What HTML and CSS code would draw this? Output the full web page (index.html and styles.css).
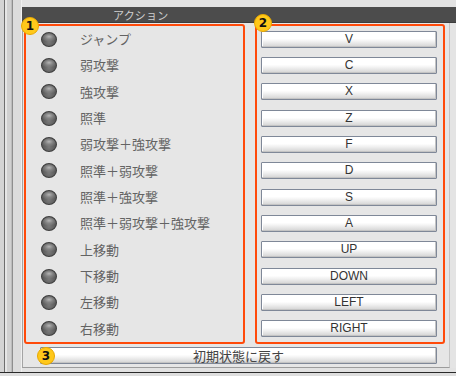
FILE: index.html
```html
<!DOCTYPE html>
<html lang="ja">
<head>
<meta charset="utf-8">
<link rel="stylesheet" href="styles.css">
</head>
<body>
<div class="win">
  <div class="frame">
    <div class="chrome-left"></div>
    <div class="main">
      <div class="top-strip"></div>
      <div class="header"><span class="header-title">アクション</span></div>
      <div class="body">
        <div class="panels">
          <div class="panel panel-left">
            <div class="row"><span class="dot"></span><span class="label">ジャンプ</span></div>
            <div class="row"><span class="dot"></span><span class="label">弱攻撃</span></div>
            <div class="row"><span class="dot"></span><span class="label">強攻撃</span></div>
            <div class="row"><span class="dot"></span><span class="label">照準</span></div>
            <div class="row"><span class="dot"></span><span class="label">弱攻撃＋強攻撃</span></div>
            <div class="row"><span class="dot"></span><span class="label">照準＋弱攻撃</span></div>
            <div class="row"><span class="dot"></span><span class="label">照準＋強攻撃</span></div>
            <div class="row"><span class="dot"></span><span class="label">照準＋弱攻撃＋強攻撃</span></div>
            <div class="row"><span class="dot"></span><span class="label">上移動</span></div>
            <div class="row"><span class="dot"></span><span class="label">下移動</span></div>
            <div class="row"><span class="dot"></span><span class="label">左移動</span></div>
            <div class="row"><span class="dot"></span><span class="label">右移動</span></div>
          </div>
          <div class="panel panel-right">
            <div class="row"><button class="key">V</button></div>
            <div class="row"><button class="key">C</button></div>
            <div class="row"><button class="key">X</button></div>
            <div class="row"><button class="key">Z</button></div>
            <div class="row"><button class="key">F</button></div>
            <div class="row"><button class="key">D</button></div>
            <div class="row"><button class="key">S</button></div>
            <div class="row"><button class="key">A</button></div>
            <div class="row"><button class="key">UP</button></div>
            <div class="row"><button class="key">DOWN</button></div>
            <div class="row"><button class="key">LEFT</button></div>
            <div class="row"><button class="key">RIGHT</button></div>
          </div>
        </div>
        <button class="key reset">初期状態に戻す</button>
      </div>
      <div class="under-body"></div>
    </div>
  </div>
  <div class="bottom-line"></div>
  <div class="bottom-strip"></div>

  <span class="badge badge-1">1</span>
  <span class="badge badge-2">2</span>
  <span class="badge badge-3">3</span>
</div>
</body>
</html>
```

FILE: styles.css
```css
* { box-sizing: border-box; }

html, body {
  margin: 0;
  padding: 0;
  background: #e2e2e2;
}

.win {
  position: relative;
  width: 456px;
  height: 376px;
  overflow: hidden;
  display: flex;
  flex-direction: column;
  background: #e4e4e4;
  font-family: "Noto Sans CJK JP", "Liberation Sans", sans-serif;
}

.frame {
  display: flex;
  height: 372px;
}

.chrome-left {
  width: 22px;
  flex: none;
  background: linear-gradient(to right,
    #d4d4d4 0 4px,
    #6e6e6e 4px 5px,
    #e6e6e6 5px 7px,
    #d0d0d0 7px 11px,
    #bcbcbc 11px 12px,
    #8e8e8e 12px 13px,
    #dcdcdc 13px 21px,
    #f0f0f0 21px 22px);
}

.main {
  flex: 1;
  display: flex;
  flex-direction: column;
}

.top-strip {
  height: 7px;
  background: #e3e3e3;
}

.header {
  height: 16px;
  background: #4c4c4c;
  color: #cfcfcf;
  font-size: 11px;
  line-height: 16px;
  padding-left: 91px;
  border-bottom: 1px solid #3c3c3c;
}

.header-title {
  letter-spacing: 0.2px;
}

.body {
  display: flex;
  flex-direction: column;
  margin-right: 6px;
  padding: 1px 4px 3px 1px;
  border-left: 1px solid #a4a4a4;
  border-right: 1px solid #c4c4c4;
  border-bottom: 1px solid #9c9c9c;
  background: #e6e6e6;
}

.under-body {
  flex: 1;
  background: #e2e2e2;
}

.panels {
  display: flex;
  gap: 10px;
  height: 320px;
}

.panel {
  border: 2px solid #ff4a0a;
  border-radius: 3px;
  display: grid;
  grid-template-rows: repeat(12, 1fr);
}

.panel-left {
  width: 221px;
}

.panel-right {
  width: 190px;
  padding: 0 6px 0 4px;
}

.row {
  display: flex;
  align-items: center;
}

.dot {
  width: 16px;
  height: 15px;
  margin-left: 15px;
  border-radius: 50%;
  border: 1px solid #3e3e3e;
  background:
    radial-gradient(ellipse 60% 40% at 50% 28%, #b4b4b4 0%, rgba(150,150,150,0.6) 50%, rgba(120,120,120,0) 100%),
    radial-gradient(circle at 50% 70%, #7a7a7a 0%, #5a5a5a 55%, #444 100%);
  flex: none;
}

.label {
  margin-left: 23px;
  font-size: 13px;
  color: #636363;
  line-height: 16px;
}

.key {
  display: block;
  width: 100%;
  height: 17px;
  margin: 0;
  padding: 0;
  border: 1px solid #7f8898;
  border-radius: 1px;
  background:
    linear-gradient(to bottom, #ffffff 0%, #ffffff 45%, #f0f0f0 65%, #d2d2d2 100%);
  box-shadow: inset -1px -1px 0 #c4c4c4, inset 1px 1px 0 #ffffff;
  font-family: "Liberation Sans", "Noto Sans CJK JP", sans-serif;
  font-size: 12px;
  line-height: 15px;
  color: #333;
  text-align: center;
}

.reset {
  width: auto;
  margin: 3px 8px 0 16px;
  font-family: "Noto Sans CJK JP", "Liberation Sans", sans-serif;
  font-size: 13px;
  color: #444;
}

.bottom-line {
  height: 1px;
  background: #2a2a2a;
}

.bottom-strip {
  flex: 1;
  background: #dedede;
}

.badge {
  position: absolute;
  width: 18px;
  height: 18px;
  border-radius: 50%;
  background: #ffc81a;
  border: 1px solid #e8a800;
  color: #111;
  font-family: "DejaVu Sans", sans-serif;
  font-weight: bold;
  font-size: 12px;
  line-height: 16px;
  text-align: center;
}

.badge-1 { left: 21px; top: 17px; }
.badge-2 { left: 254px; top: 14px; }
.badge-3 { left: 37px; top: 347px; }
```
